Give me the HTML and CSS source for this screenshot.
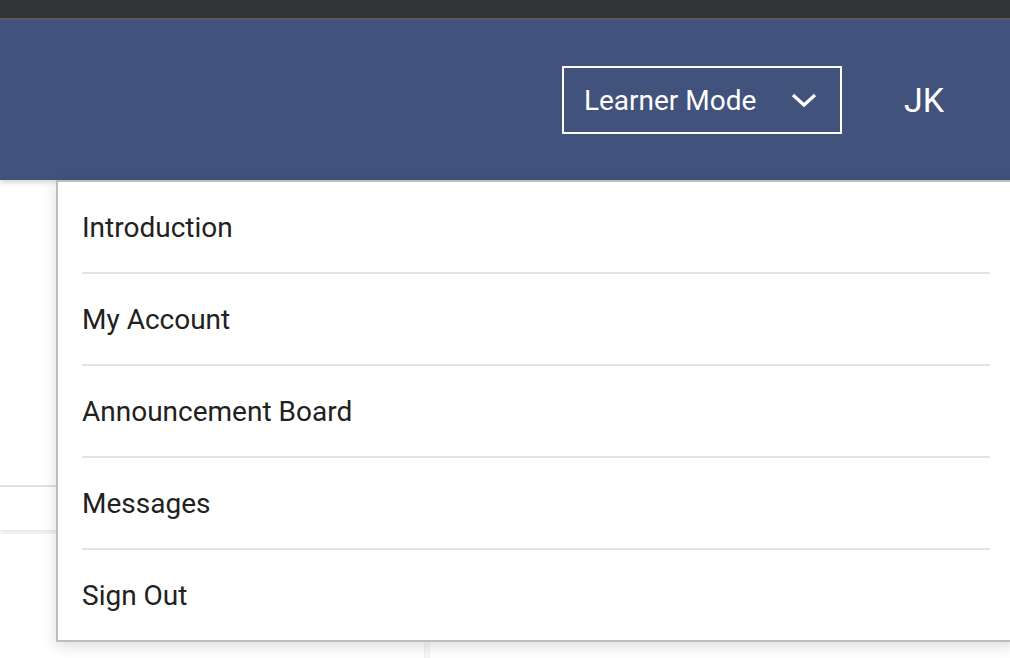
FILE: index.html
```html
<!DOCTYPE html>
<html lang="en">
<head>
    <meta charset="UTF-8">
    <meta name="viewport" content="width=device-width, initial-scale=1.0">
    <title>Learner Dashboard</title>
    <link rel="stylesheet" href="styles.css">
</head>
<body>
    <div class="topstrip"></div>
    <header class="header">
        <button class="mode-select">
            <span>Learner Mode</span>
            <svg class="chevron" width="26" height="16" viewBox="0 0 26 16">
                <path d="M2 3 L13 13 L24 3" fill="none" stroke="#fff" stroke-width="3.2"/>
            </svg>
        </button>
        <div class="initials">JK</div>
    </header>

    <main class="content">
        <section class="card card-top">
            <div class="card-row"></div>
            <div class="card-row"></div>
        </section>
        <div class="card-grid">
            <section class="card card-small"></section>
            <section class="card card-wide"></section>
        </div>
    </main>

    <!-- user menu, opened from the initials -->
    <nav class="user-menu">
        <a class="menu-item" href="#">Introduction</a>
        <a class="menu-item" href="#">My Account</a>
        <a class="menu-item" href="#">Announcement Board</a>
        <a class="menu-item" href="#">Messages</a>
        <a class="menu-item" href="#">Sign Out</a>
    </nav>
</body>
</html>
```

FILE: styles.css
```css
body {
    margin: 0;
    font-family: Roboto, "Liberation Sans", Arial, sans-serif;
    background: #ffffff;
    color: #222;
    overflow: hidden;
    height: 658px;
}
.topstrip {
    height: 18px;
    background: #333437;
    border-bottom: 2px solid #5b5c60;
}
.header {
    height: 160px;
    background: #41527d;
    display: flex;
    align-items: center;
    justify-content: flex-end;
    padding-right: 66px;
    box-shadow: 0 2px 6px rgba(0, 0, 0, 0.2);
    position: relative;
}
.mode-select {
    width: 280px;
    height: 68px;
    box-sizing: border-box;
    border: 2px solid #ffffff;
    background: transparent;
    color: #ffffff;
    font-family: inherit;
    font-size: 28px;
    display: flex;
    align-items: center;
    justify-content: space-between;
    padding: 0 23px 0 20px;
}
.chevron {
    display: block;
}
.initials {
    color: #ffffff;
    font-size: 34px;
    margin-left: 62px;
}
.card {
    background: #ffffff;
    box-shadow: 0 2px 5px rgba(0, 0, 0, 0.12);
}
.card-top {
    height: 350px;
}
.card-row {
    height: 305px;
    border-bottom: 2px solid #dfe2e6;
}
.card-row + .card-row {
    height: 43px;
    border-bottom: none;
}
.card-grid {
    display: flex;
    gap: 6px;
    margin-top: 4px;
}
.card-small {
    width: 424px;
    height: 140px;
}
.card-wide {
    flex: 1;
    height: 140px;
}
.user-menu {
    position: absolute;
    top: 180px;
    left: 56px;
    width: 960px;
    background: #ffffff;
    border: 2px solid #bdbdbd;
    box-shadow: 0 4px 14px rgba(0, 0, 0, 0.14);
    padding: 0 24px;
    box-sizing: border-box;
    display: flex;
    flex-direction: column;
}
.menu-item {
    height: 90px;
    display: flex;
    align-items: center;
    font-size: 28px;
    color: #212121;
    text-decoration: none;
    border-bottom: 2px solid #e0e3e8;
}
.menu-item:last-child {
    border-bottom: none;
}
```
